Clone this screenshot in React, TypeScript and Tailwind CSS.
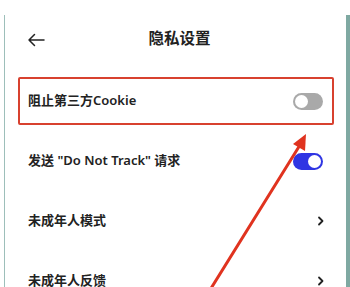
import React from "react";

function Toggle({ on }: { on: boolean }) {
  return (
    <div
      className={`relative w-[30px] h-[17px] rounded-full ${on ? "bg-[#2f35e3]" : "bg-[#a9a9a9]"}`}
    >
      <div
        className={`absolute top-[2px] w-[13px] h-[13px] rounded-full bg-white ${on ? "right-[2px]" : "left-[2px]"}`}
      />
    </div>
  );
}

function Chevron() {
  return (
    <svg width="8" height="10" viewBox="0 0 8 10" className="-mr-[2px]">
      <path d="M2 1.5 L5.5 5 L2 8.5" fill="none" stroke="#222" strokeWidth="1.8" strokeLinecap="round" strokeLinejoin="round" />
    </svg>
  );
}

function Row({ label, right }: { label: string; right: React.ReactNode }) {
  return (
    <div className="h-[60px] flex items-center justify-between pl-[23px] pr-[23px]">
      <span className="text-[13px] font-semibold text-[#222]">{label}</span>
      {right}
    </div>
  );
}

export default function App() {
  return (
    <div
      className="relative w-[350px] h-[287px] overflow-hidden bg-white"
      style={{ fontFamily: '"Noto Sans", "Noto Sans CJK SC", sans-serif' }}
    >
      <div className="pt-[15px] pl-[4px] h-full">
        <div className="h-full border-l-[1.5px] border-[#9dbfba] border-r-[4px] border-r-[#7fa9a2] bg-white">
          {/* header */}
          <div className="h-[56px] pb-[6px] flex items-center relative">
            <svg width="18" height="14" viewBox="0 0 18 14" className="ml-[22px]">
              <path d="M17 7 H2 M7.5 1.5 L2 7 L7.5 12.5" fill="none" stroke="#222" strokeWidth="1.5" strokeLinecap="round" strokeLinejoin="round" />
            </svg>
            <span className="absolute left-0 right-0 text-center text-[15.5px] font-semibold text-[#222] pl-[8px] -mt-[2px] pointer-events-none">
              隐私设置
            </span>
          </div>

          <Row label="阻止第三方Cookie" right={<Toggle on={false} />} />
          <Row label={'发送 "Do Not Track" 请求'} right={<Toggle on={true} />} />
          <Row label="未成年人模式" right={<Chevron />} />
          <Row label="未成年人反馈" right={<Chevron />} />
        </div>
      </div>

      {/* annotation: red box */}
      <div className="absolute left-[18px] top-[77px] w-[316px] h-[48px] border-2 border-[#d8412f] rounded-[2px]" />

      {/* annotation: red arrow */}
      <svg className="absolute left-0 top-0" width="350" height="287" viewBox="0 0 350 287">
        <line x1="210" y1="290" x2="300" y2="145" stroke="#e0331f" strokeWidth="3" strokeLinecap="round" />
        <polygon points="306,134 305,151 293,144" fill="#e0331f" />
      </svg>
    </div>
  );
}
